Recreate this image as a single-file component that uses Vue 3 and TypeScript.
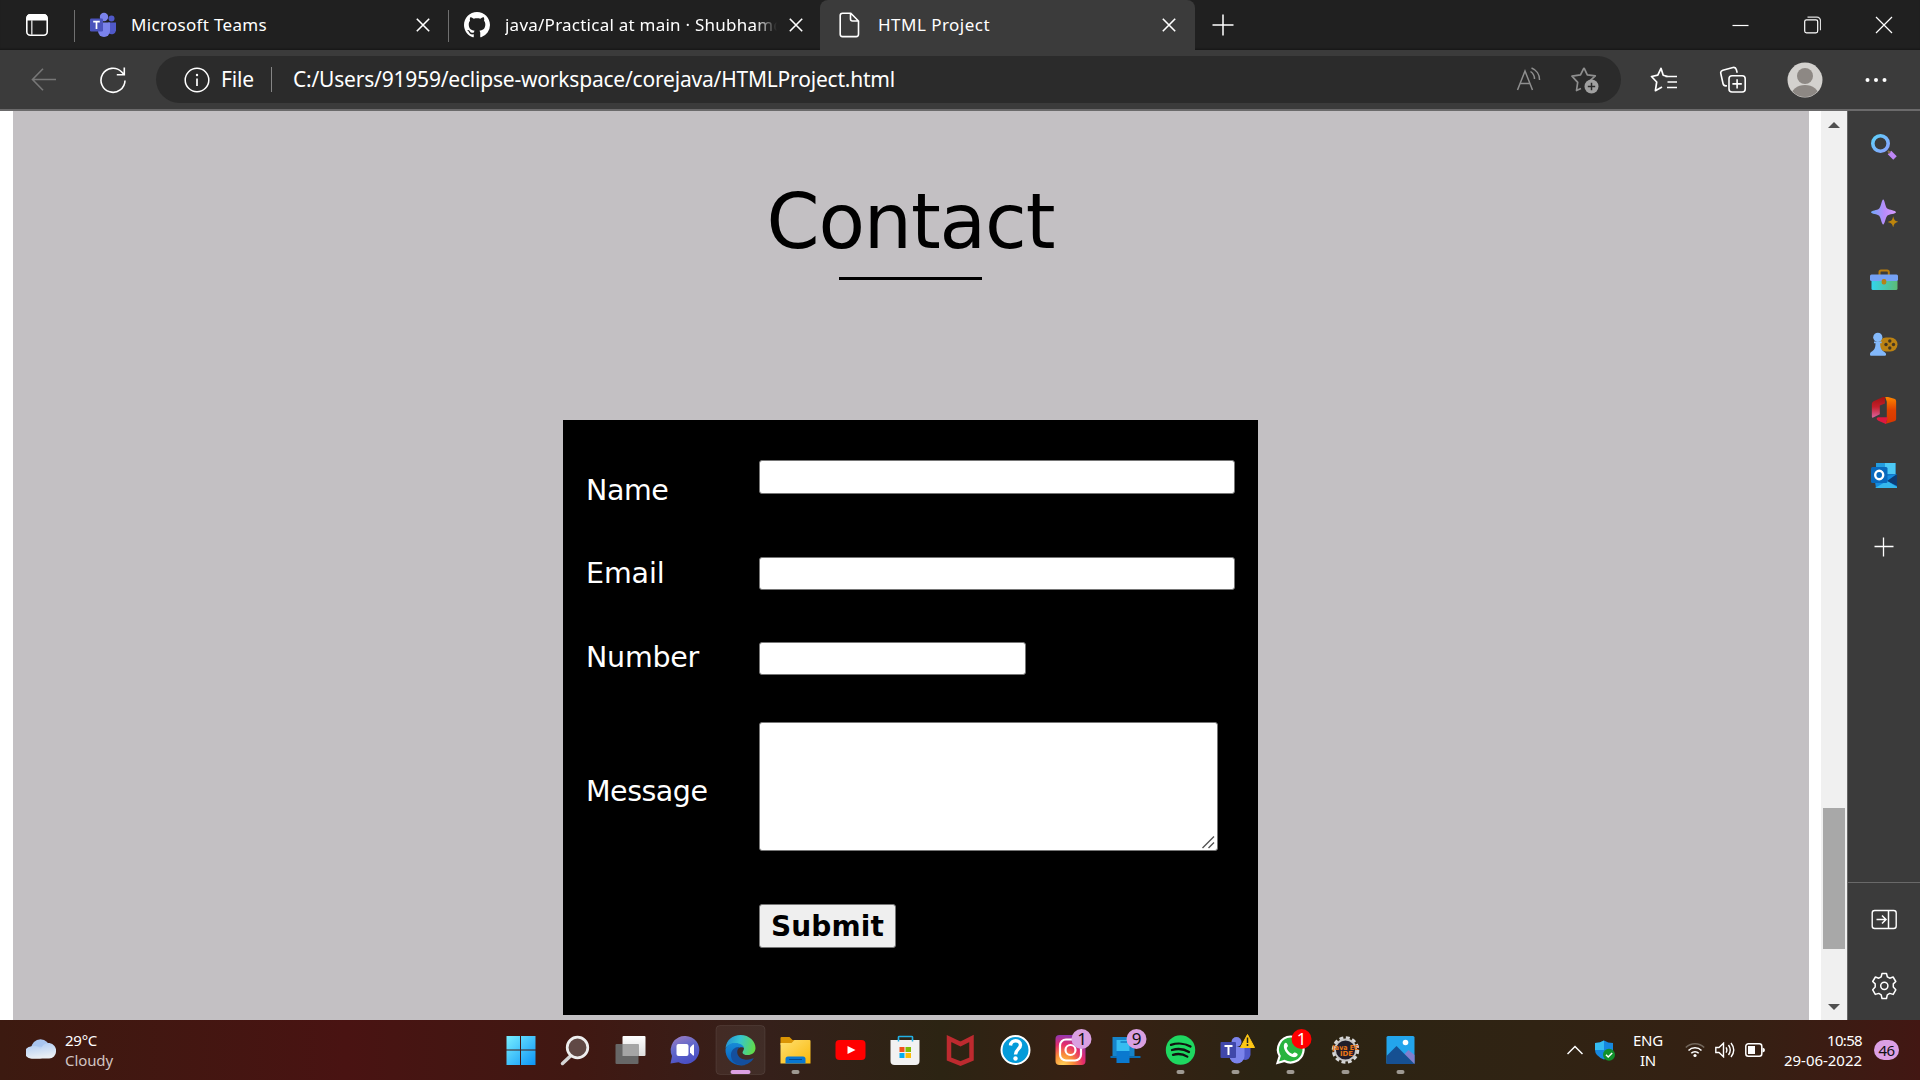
<script setup lang="ts">
import { reactive } from 'vue'

interface Tab { id: string; title: string; width: number; fit: number; active: boolean }

const tabs: Tab[] = [
  { id: 'teams', title: 'Microsoft Teams', width: 374, fit: 136, active: false },
  { id: 'github', title: 'java/Practical at main · Shubhamd', width: 373, fit: 279, active: false },
  { id: 'file', title: 'HTML Project', width: 375, fit: 112, active: true },
]
const form = reactive({ name: '', email: '', number: '', message: '' })

// Tracks a line of text out to a given width in pixels.
const vFit = {
  mounted(el: HTMLElement, binding: { value: number }) {
    const count = (el.textContent ?? '').trim().length
    const natural = el.getBoundingClientRect().width
    el.style.letterSpacing = `${(binding.value - natural) / count}px`
  },
}
</script>

<template>
  <div class="screen">
    <header class="tabbar">
      <div class="tab-actions">
        <svg width="24" height="24" viewBox="0 0 24 24"><rect x="1.8" y="1.8" width="20.4" height="20.4" rx="3.5" fill="none" stroke="#fff" stroke-width="1.6" /><path d="M1.5 7.5V5a4 4 0 0 1 4-4h13a4 4 0 0 1 4 4v2.500z" fill="#fff" /><path d="M6.800 7v15" stroke="#ccc" stroke-width="1.500" /></svg>
      </div>
      <div v-for="tab in tabs" :key="tab.id" class="tab" :class="{ active: tab.active }" :style="{ width: tab.width + 'px' }">
        <svg v-if="tab.id === 'teams'" class="favicon" width="26" height="26" viewBox="0 0 26 26">
          <circle cx="21.500" cy="6.500" r="3" fill="#5059c9" /><path d="M18 10.500h8v8a4.500 4.500 0 0 1-7 3z" fill="#5059c9" />
          <circle cx="14" cy="5" r="4.200" fill="#7b83eb" /><path d="M8 10.500h12v8.500a6 6 0 0 1-12 0z" fill="#7b83eb" />
          <rect x="0" y="6.500" width="13" height="13" rx="1.300" fill="#4b53bc" /><path d="M3.200 9.600h6.600M6.500 9.600v7.500" stroke="#fff" stroke-width="1.700" />
        </svg>
        <svg v-else-if="tab.id === 'github'" class="favicon" width="26" height="26" viewBox="0 0 16 16"><path fill="#fff" d="M8 0C3.580 0 0 3.580 0 8c0 3.540 2.290 6.530 5.470 7.590.4.070.55-.17.55-.38 0-.19-.01-.82-.01-1.490-2.010.37-2.530-.49-2.690-.94-.09-.23-.48-.94-.82-1.130-.28-.15-.68-.52-.01-.53.63-.01 1.080.58 1.230.82.72 1.210 1.870.87 2.330.66.07-.52.28-.87.51-1.070-1.780-.2-3.640-.89-3.640-3.950 0-.87.31-1.590.82-2.150-.08-.2-.36-1.020.08-2.120 0 0 .67-.21 2.200.82.64-.18 1.320-.27 2-.27s1.360.09 2 .27c1.530-1.040 2.200-.82 2.200-.82.44 1.100.16 1.920.08 2.120.51.56.82 1.270.82 2.150 0 3.070-1.870 3.750-3.650 3.950.29.25.54.73.54 1.480 0 1.070-.01 1.930-.01 2.200 0 .21.15.46.55.38A8.010 8.010 0 0 0 16 8c0-4.420-3.580-8-8-8z" /></svg>
        <svg v-else class="favicon" width="26" height="26" viewBox="0 0 26 26"><path d="M5.500 1.200h8.300l7.700 7.800v13.300a2.300 2.300 0 0 1-2.300 2.300H5.500a2.300 2.300 0 0 1-2.300-2.300V3.500a2.300 2.300 0 0 1 2.300-2.300zM13.500 1.500v5.500a2 2 0 0 0 2 2h5.800" fill="none" stroke="#fff" stroke-width="1.600" /></svg>
        <div class="tab-title" :class="{ fade: tab.id === 'github' }"><span v-fit="tab.fit" class="fit">{{ tab.title }}</span></div>
        <svg class="tab-close" width="14" height="14" viewBox="0 0 14 14"><path d="M.8.800l12.400 12.400M13.200.800.800 13.200" stroke="#fff" stroke-width="1.600" /></svg>
      </div>
      <svg class="new-tab" width="22" height="22" viewBox="0 0 22 22"><path d="M11 .500v21M.500 11h21" stroke="#fff" stroke-width="1.500" /></svg>
      <div class="window-controls">
        <svg width="18" height="18" viewBox="0 0 18 18"><path d="M1.500 9.500h16" stroke="#fff" stroke-width="1.200" /></svg>
        <svg width="18" height="18" viewBox="0 0 18 18"><rect x="1.700" y="3.800" width="13" height="13" rx="1.800" fill="none" stroke="#fff" stroke-width="1.200" /><path d="M4.500 1.200h9.500a3.500 3.500 0 0 1 3.500 3.500v9.500" fill="none" stroke="#ddd" stroke-width="1.200" /></svg>
        <svg width="18" height="18" viewBox="0 0 18 18"><path d="M1 1l16 16M17 1 1 17" stroke="#fff" stroke-width="1.200" /></svg>
      </div>
    </header>

    <div class="toolbar">
      <svg class="back" width="26" height="26" viewBox="0 0 26 26"><path d="M25 12.500H1.500M12 1.800 1.500 12.500 12 23.200" fill="none" stroke="#777" stroke-width="1.600" /></svg>
      <svg class="reload" width="28" height="28" viewBox="0 0 28 28"><path d="M26 14.500A12 12 0 1 1 22.500 5.800L25 8.500M25.300 1.500v7.300h-7.500" fill="none" stroke="#fff" stroke-width="1.600" /></svg>
      <div class="address">
        <svg width="26" height="26" viewBox="0 0 26 26"><circle cx="13" cy="13" r="11.800" fill="none" stroke="#fff" stroke-width="1.500" /><path d="M13 11.500v7.500" stroke="#fff" stroke-width="1.700" /><circle cx="13" cy="8" r="1.200" fill="#fff" /></svg>
        <div class="scheme"><span v-fit="33" class="fit">File</span></div>
        <i class="divider"></i>
        <div class="url"><span v-fit="602" class="fit">C:/Users/91959/eclipse-workspace/corejava/HTMLProject.html</span></div>
        <svg class="read" width="26" height="26" viewBox="0 0 26 26"><path d="M1.500 23 9 4l7.500 19M4.200 16.500h9.600M14.500 4.500a9 9 0 0 1 4 7.500M15.500 1a12.500 12.500 0 0 1 8 12" fill="none" stroke="#8f8f8f" stroke-width="1.500" /></svg>
        <svg class="fav" width="28" height="28" viewBox="0 0 28 28"><path d="M13 1.800l3.300 7 8 1.100-5.500 5M10 22.500l-4.500 2 1.200-8.200L1 10.200l8.500-1.400L13 1.800" fill="none" stroke="#8f8f8f" stroke-width="1.700" stroke-linejoin="round" /><circle cx="20.500" cy="20.500" r="7" fill="#a0a0a0" /><path d="M20.500 16.800v7.400M16.800 20.500h7.400" stroke="#292929" stroke-width="1.500" /></svg>
      </div>
      <div class="tools">
        <svg width="28" height="28" viewBox="0 0 28 28"><path d="M17.500 10.500 13.200 9.200 11 2.300 7.800 9.200 1.500 10.500l5.200 5.500-1.300 8.700 6.600-3.800" fill="none" stroke="#fff" stroke-width="1.700" stroke-linejoin="round" /><path d="M15.500 10.500H27M17.500 16H27M17 21.500h10" stroke="#fff" stroke-width="1.700" /></svg>
        <svg width="28" height="28" viewBox="0 0 28 28"><rect x="10" y="9.800" width="16.200" height="16.200" rx="3" fill="none" stroke="#fff" stroke-width="1.600" /><path d="M18.100 13.200v9.400M13.400 17.900h9.400M8 19.800l-1.200.1A3 3 0 0 1 4 17.500L1.800 7.500a2.800 2.800 0 0 1 2-3.300L14 1.500a2.800 2.800 0 0 1 3.300 2l.9 3.300" fill="none" stroke="#fff" stroke-width="1.600" /></svg>
        <svg width="36" height="36" viewBox="0 0 36 36"><clipPath id="face"><circle cx="18" cy="18" r="17" /></clipPath><circle cx="18" cy="18" r="17.500" fill="#d3d1ce" /><g clip-path="url(#face)" fill="#8d8884"><circle cx="18" cy="14" r="8" /><ellipse cx="18" cy="34" rx="14" ry="11" /></g></svg>
        <svg width="24" height="24" viewBox="0 0 24 24" fill="#fff"><circle cx="3.500" cy="12" r="2" /><circle cx="12" cy="12" r="2" /><circle cx="20.500" cy="12" r="2" /></svg>
      </div>
    </div>

    <div class="body">
      <main class="page">
        <section class="contact">
          <h1><span v-fit="288" class="fit">Contact</span></h1>
          <div class="underline"></div>
          <form class="form" @submit.prevent>
            <div class="row r-name"><label for="name"><span v-fit="82.500" class="fit">Name</span></label><input id="name" v-model="form.name" class="field" /></div>
            <div class="row r-email"><label for="email"><span v-fit="78.500" class="fit">Email</span></label><input id="email" v-model="form.email" class="field" /></div>
            <div class="row r-number"><label for="number"><span v-fit="113" class="fit">Number</span></label><input id="number" v-model="form.number" class="field short" /></div>
            <div class="row r-message"><label for="message"><span v-fit="121.500" class="fit">Message</span></label>
              <div class="area"><textarea id="message" v-model="form.message"></textarea><svg width="13" height="13" viewBox="0 0 13 13"><path d="M.500 12 12 .500M6.500 12 12 6.500" stroke="#555" stroke-width="1.400" /></svg></div>
            </div>
            <div class="row r-submit"><label></label><button type="submit"><span v-fit="113" class="fit">Submit</span></button></div>
          </form>
        </section>
      </main>
      <div class="scrollbar">
        <svg width="12" height="6" viewBox="0 0 12 6"><path d="M0 6 6 0l6 6z" fill="#505050" /></svg>
        <div class="track"><div class="thumb"></div></div>
        <svg width="12" height="6" viewBox="0 0 12 6"><path d="M0 0h12L6 6z" fill="#505050" /></svg>
      </div>
      <aside class="sidebar">
        <svg class="cell" viewBox="-14 -14 28 28">
          <defs>
            <linearGradient id="sLens" x1="0" y1="0" x2="1" y2="1"><stop offset="0" stop-color="#5ed0fa" /><stop offset="1" stop-color="#8ba1ff" /></linearGradient>
            <linearGradient id="sStar" x1="0" y1="0" x2="1" y2="0"><stop offset="0" stop-color="#70a8fa" /><stop offset=".55" stop-color="#b98cfb" /><stop offset="1" stop-color="#d79cff" /></linearGradient>
            <linearGradient id="sBox" x1="0" y1="0" x2="1" y2="0"><stop offset="0" stop-color="#32d4ee" /><stop offset="1" stop-color="#5dbb74" /></linearGradient>
            <linearGradient id="sOffice" x1="0" y1="0" x2="0" y2="1"><stop offset="0" stop-color="#ff8a00" /><stop offset=".5" stop-color="#e04200" /><stop offset="1" stop-color="#d83600" /></linearGradient>
            <linearGradient id="sOfficeL" x1="0" y1="0" x2="0" y2="1"><stop offset="0" stop-color="#9c1210" /><stop offset=".5" stop-color="#c61f2b" /><stop offset="1" stop-color="#d963a0" /></linearGradient>
          </defs>
          <path d="M5.500 5.500 11 11" stroke="#bd86f6" stroke-width="5" /><path d="m4 4 2 2" stroke="#8a744f" stroke-width="2" /><circle cx="-3.500" cy="-3.500" r="7.700" fill="none" stroke="url(#sLens)" stroke-width="3.600" />
        </svg>
        <svg class="cell" viewBox="-14 -14 28 28"><path d="M-.8-13.500C.7-13.500 1.200-6 3.200-4.500S12-2.600 12-.7 4.800 1 3.200 2.800.700 11.500-.8 11.500-3.200 4.600-4.800 2.800-13 1.200-13-.7s6.200-1.800 8.200-3.800S-2.300-13.500-.8-13.500z" fill="url(#sStar)" /><path d="M9.200 3.200c1 4 1.400 4.500 5.500 5.700-4.100 1.200-4.500 1.700-5.500 5.600-1-3.900-1.400-4.400-5.500-5.600 4.100-1.200 4.500-1.700 5.500-5.700z" fill="#bd850c" /></svg>
        <svg class="cell" viewBox="-14 -14 28 28"><path d="M-4.500-4v-3q0-1.500 1.500-1.500h6Q4.800-8.500 4.800-7v3" fill="none" stroke="#b87d0f" stroke-width="2" /><rect x="-12.500" y="1" width="26" height="10" rx="1.500" fill="url(#sBox)" /><rect x="-14" y="-4.500" width="28" height="6.500" rx="1.500" fill="#75a1f4" /><rect x="-2.300" y="0" width="4.600" height="5.500" rx="1.800" fill="#b78117" /></svg>
        <svg class="cell" viewBox="-14 -13.500 28 28"><rect x="-5" y="-7" width="18.500" height="14" rx="7" fill="#bb8213" /><g fill="#443722"><circle cx="5.800" cy="-3.500" r="1.700" /><circle cx="5.800" cy="3.500" r="1.700" /><circle cx="2" cy="0" r="1.700" /><circle cx="9.500" cy="0" r="1.700" /></g><circle cx="-6.200" cy="-7.200" r="4.600" fill="#85bafb" /><path d="M-10-3h7.600v1.800h-1.500c.2 4.200.8 6.500 3.600 8.200 2.200 1.500 2.500 2 2.300 3.500q-.2.800-1.200.8H-13q-1 0-1-1c0-2 .3-2.300 2.200-3.500 2.700-2 3.200-3.800 3.300-8H-10z" fill="#83b8fa" /></svg>
        <svg class="cell" viewBox="-14 -14 28 30"><path d="M-13-6.500q0-2 1.800-3L1-15v8L-4.500-5v9.500L-11 7.800q-2 1-2-1z" fill="url(#sOfficeL)" /><path d="M1-15 11-12q2 .6 2 2.500v19q0 2-2 2.500L1 15l2-3V-9z" fill="url(#sOffice)" /><path d="M-6.500 7.800H4L2 15l-8-3.500q-3.500-2.200-.5-3.700z" fill="#df1840" /></svg>
        <svg class="cell" viewBox="-14 -12 28 28"><rect x="-8" y="-13" width="19.500" height="16" rx="1.500" fill="#1577c5" /><path d="M1-12h10.500v11H1z" fill="#4cc9f5" /><path d="M-8-12H1v6h-9z" fill="#239de0" /><path d="M-10 1h13l10-2v14H-8z" fill="#138be0" /><path d="m3 6 10-7v12z" fill="#0d3c75" /><path d="m3 6 10 6v1H-9z" fill="#35b7ed" /><rect x="-13" y="-8" width="16.500" height="16" rx="1.500" fill="#0969bd" /><ellipse cx="-4.800" cy="0" rx="4" ry="4.200" fill="none" stroke="#fff" stroke-width="2.400" /></svg>
        <svg class="cell plus" viewBox="-14 -14 28 28"><path d="M-9.500-.5h19M-.500-9.500v19" stroke="#fff" stroke-width="1.300" /></svg>
        <div class="bottom">
          <svg class="cell" viewBox="-14 -13.500 28 28"><rect x="-11.800" y="-9" width="24" height="18" rx="2.500" fill="none" stroke="#fff" stroke-width="1.400" /><path d="M4.500-9V9M-7.500 0h9M-2-4l4 4-4 4" fill="none" stroke="#fff" stroke-width="1.500" /></svg>
          <svg class="cell" viewBox="-14 -14 28 28"><path d="M-2.800-9.200-2-12.500h4.500l.8 3.300 2.400 1.400 3.400-1.200 2.700 4.500-2.500 2.400V1L11.800 3.800 9.200 8.400 5.700 7.400 3.300 8.800 2.500 12.500H-2L-2.800 8.800-5.200 7.400-8.700 8.400-11.300 3.800-8.800 1v-3.100l-2.500-2.400L-8.600-9l3.400 1.200z" fill="none" stroke="#fff" stroke-width="1.500" stroke-linejoin="round" /><circle cx=".3" cy="-.2" r="3.600" fill="none" stroke="#fff" stroke-width="1.500" /></svg>
        </div>
      </aside>
    </div>

    <footer class="taskbar">
      <div class="weather">
        <svg width="30" height="20" viewBox="0 0 30 20"><defs><linearGradient id="cl" x1="0" y1="0" x2=".3" y2="1"><stop offset="0" stop-color="#a9c8f3" /><stop offset="1" stop-color="#e9eef5" /></linearGradient></defs><circle cx="14.500" cy="9.500" r="9.300" fill="#a9c5ef" /><rect x="0" y="7.500" width="20" height="12" rx="6" fill="url(#cl)" /><path d="M5 19.500a6 6 0 0 1 0-12 8 8 0 0 1 10 3 7.500 7.500 0 0 1 15 2 6.800 6.800 0 0 1-7 7z" fill="url(#cl)" /></svg>
        <div class="lines"><div><span v-fit="32" class="fit">29°C</span></div><div class="dim"><span v-fit="48" class="fit">Cloudy</span></div></div>
      </div>
      <div class="apps">
        <svg viewBox="-27.5 -30 55 60"><defs><linearGradient id="win" x1="0" y1="0" x2="1" y2="1"><stop offset="0" stop-color="#78efff" /><stop offset="1" stop-color="#0c94f7" /></linearGradient></defs><path d="M-14-14H-.500v13.500H-14zM.500-14H15v13.500H.500zM-14 .500H-.500V15H-14zM.500.500H15V15H.500z" fill="url(#win)" /></svg>
        <svg viewBox="-27.5 -30 55 60"><path d="M-5 6-13 13.500" stroke="#d5d5d5" stroke-width="3.500" stroke-linecap="round" /><circle cx="2" cy="-2.500" r="10.300" fill="#604945" stroke="#eee" stroke-width="2.700" /></svg>
        <svg viewBox="-27.5 -30 55 60"><defs><linearGradient id="tv" x1="0" y1="0" x2="0" y2="1"><stop offset="0" stop-color="#fff" /><stop offset="1" stop-color="#ddd" /></linearGradient></defs><rect x="-8" y="-14" width="23" height="20" rx="1" fill="url(#tv)" /><rect x="-15" y="-6" width="23" height="20" rx="1" fill="#676767" /><path d="M-8-6H8V6H-8z" fill="#a5a5a5" /></svg>
        <svg viewBox="-27.5 -30 55 60"><defs><linearGradient id="chat" x1="0" y1="0" x2=".4" y2="1"><stop offset="0" stop-color="#a37fc1" /><stop offset=".5" stop-color="#6268ca" /><stop offset="1" stop-color="#4b50c4" /></linearGradient></defs><path d="M0-14a14 14 0 1 1-7 26.200L-15 13.500l1.500-7.500A14 14 0 0 1 0-14z" fill="url(#chat)" /><rect x="-9" y="-6" width="12" height="12" rx="2" fill="#fff" /><path d="m4.500-2.500 3-3h1v11h-1l-3-3z" fill="#fff" /></svg>
        <svg viewBox="-27.5 -30 55 60">
          <defs><linearGradient id="eg" x1="0" y1=".3" x2="1" y2=".5"><stop offset="0" stop-color="#2490d5" /><stop offset=".45" stop-color="#35c5d0" /><stop offset="1" stop-color="#62dc48" /></linearGradient><linearGradient id="eb" x1="0" y1="0" x2="0" y2="1"><stop offset="0" stop-color="#178bd7" /><stop offset="1" stop-color="#075bb9" /></linearGradient></defs>
          <rect x="-24.500" y="-24.500" width="49" height="49" rx="4" fill="#fff" fill-opacity=".06" stroke="#fff" stroke-opacity=".08" />
          <path d="M-15-2C-14-10-8-15 0-15 9-15 15-8.500 15-2c0 4.500-3.500 7-8 7-3 0-5-1.200-5-2.600C2 1.500 3.500.500 3.500-2-.500-8-10-8-15-2z" fill="url(#eg)" />
          <path d="M-15-1c2-5 6.500-6.500 11-6 4.500.5 7 2.800 7.500 5C2-3.500-4-3.200-5 2.500-5.500 8.500 0 12 5 15-7 17.500-15.500 9-15-1z" fill="url(#eb)" /><path d="M-1-2.800C-5 0-4 8 4 9.500c4 .7 7.500-.7 9.300-1.500C11 12.500 6 15.300 1 15-7 14.500-10 9-9.500 4-9 0-5-3.500-1-2.800z" fill="#144f9d" />
          <rect x="-10" y="20" width="20" height="4" rx="2" fill="#dda0e3" />
        </svg>
        <svg viewBox="-27.5 -30 55 60"><defs><linearGradient id="fo" x1="0" y1="0" x2="1" y2="1"><stop offset="0" stop-color="#ffdf70" /><stop offset="1" stop-color="#f9b90b" /></linearGradient></defs><path d="M-15-12q0-1 1-1h8l3 3h7v5h-19z" fill="#da9404" /><path d="M-15-7h11l3-3h15q1 0 1 1v22.500h-30z" fill="url(#fo)" /><path d="M-10 13.500V9q0-2.500 2.500-2.500h15Q10 6.500 10 9v4.500z" fill="#0877d1" /><path d="M-6.500 9.500h13" stroke="#064c8f" /><rect class="running" x="-4" y="20" width="8" height="4" rx="2" /></svg>
        <svg viewBox="-27.5 -30 55 60"><rect x="-15" y="-10" width="30" height="20" rx="4" fill="#f00" /><path d="M-3-4v8l8-4z" fill="#fff" /></svg>
        <svg viewBox="-27.5 -30 55 60"><path d="M-7-9v-4q0-.5 1-.5H6q1 0 1 .5v4" fill="none" stroke="#22b1e4" stroke-width="1.600" /><path d="M-15-10h29V11q0 4-4 4h-21q-4 0-4-4z" fill="#f2f2f2" /><path d="M-6-3h5v5h-5z" fill="#f1511b" /><path d="M0-3h5.500v5H0z" fill="#80bc06" /><path d="M-6 3h5v5h-5z" fill="#00adef" /><path d="M0 3h5.500v5H0z" fill="#fbbc09" /><path d="M-7-10.500v2M7-10.500v2" stroke="#22b1e4" stroke-width="1.500" /></svg>
        <svg viewBox="-27.5 -30 55 60"><path d="M-11.500-11.500 0-6l11-5.500V9L0 13.500-11.500 9z" fill="none" stroke="#bd2a2f" stroke-width="4.500" /></svg>
        <svg viewBox="-27.5 -30 55 60"><circle r="14" fill="#049bd9" stroke="#fff" stroke-width="2" /><path d="M-5-4.500C-4.500-11 5-10.500 5-5 5-1 0-.5 0 4.500" fill="none" stroke="#fff" stroke-width="3.400" /><circle cx="0" cy="8.500" r="2.200" fill="#fff" /></svg>
        <svg viewBox="-27.5 -30 55 60"><defs><radialGradient id="ig" cx=".25" cy="1" r="1.150"><stop offset="0" stop-color="#ffd45b" /><stop offset=".3" stop-color="#fa8e37" /><stop offset=".6" stop-color="#e52b6b" /><stop offset="1" stop-color="#6b3dd0" /></radialGradient></defs><rect x="-15" y="-15" width="30" height="30" rx="4" fill="url(#ig)" /><rect x="-10.500" y="-10.500" width="21" height="21" rx="6" fill="none" stroke="#fff" stroke-width="2.200" /><circle r="5" fill="none" stroke="#fff" stroke-width="2.200" /><circle cx="11" cy="-11" r="10" fill="#daa0e2" /><text class="badge" x="11.500" y="-5">1</text></svg>
        <svg viewBox="-27.5 -30 55 60"><path d="M-13-13H9V8H-13z" fill="#1684c9" /><path d="M-15 6h30v2h-30z" fill="#096bb0" /><path d="M-9-10H4V13H-9z" fill="#0a79cf" /><path d="M-9-10H4V1H-9z" fill="#36bdf1" /><path d="M-5-8h7" stroke="#137bc0" stroke-width="1.500" /><circle cx="11" cy="-11" r="10" fill="#daa0e2" /><text class="badge" x="11" y="-5">9</text></svg>
        <svg viewBox="-27.5 -30 55 60"><circle r="14.700" fill="#1ed760" /><path d="M-9.500-5.200C-3-7.200 5-6.500 10-3.500M-8.500.000C-3-1.600 4-.8 8.500 2M-7.500 4.800C-3 3.500 3 4.200 6.800 6.600" fill="none" stroke="#111" stroke-width="2.300" stroke-linecap="round" /><rect class="running" x="-4" y="20" width="8" height="4" rx="2" /></svg>
        <svg viewBox="-27.5 -30 55 60"><path d="M5-3h10V5q-2 7-8 4z" fill="#5059c9" /><circle cx="1" cy="-8" r="5" fill="#7b83eb" /><path d="M-6-3H9V6A7 7 0 0 1-6 6z" fill="#7b83eb" /><rect x="-15" y="-8" width="15.500" height="16" rx="1" fill="#4047aa" /><path d="M-11-4h8M-7-4v9" stroke="#fff" stroke-width="2" /><path d="M12-15.500 19-2.500H5z" fill="#ffc715" stroke="#ffc715" stroke-linejoin="round" /><path d="M12-12.500V-7" stroke="#222" stroke-width="1.500" /><circle cx="12" cy="-5" r="1" fill="#222" /><rect class="running" x="-4" y="20" width="8" height="4" rx="2" /></svg>
        <svg viewBox="-27.5 -30 55 60"><path d="M0-13.500A13 13 0 1 1-6 11L-13 13l2.200-7A13 13 0 0 1 0-13.500z" fill="#29b43f" stroke="#fff" stroke-width="2.200" /><path d="M-6-6.500c1.500-1.500 2.500-.5 3.500 2.500C-4-2-4-2-3 0c1.200 2 2.800 3 5 4C4 2 4 2 6.500 3.500 8 4.500 7 6 5 7-1 8.500-9-1-6-6.500z" fill="#fff" /><circle cx="11" cy="-11" r="10" fill="#f00" /><text class="badge white" x="11" y="-5">1</text><rect class="running" x="-4" y="20" width="8" height="4" rx="2" /></svg>
        <svg viewBox="-27.5 -30 55 60"><circle r="12" fill="none" stroke="#d7d7d7" stroke-width="3.500" stroke-dasharray="3.800 2.480" /><circle r="10.500" fill="#211d29" stroke="#c6c6c6" stroke-width="1.800" /><text class="java" x="0" y="-.5" textLength="26" lengthAdjust="spacingAndGlyphs">Java EE</text><text class="java" x="1" y="5.500">IDE</text><rect class="running" x="-4" y="20" width="8" height="4" rx="2" /></svg>
        <svg viewBox="-27.5 -30 55 60"><rect x="-14" y="-14" width="28" height="28" rx="1.500" fill="#23a5ec" /><path d="M2 6 8 0l6 5v9H2z" fill="#817fce" /><path d="M-14 6-4-4 14 14h-28z" fill="#165092" /><circle cx="5" cy="-7.500" r="2.800" fill="#fff" /><rect class="running" x="-4" y="20" width="8" height="4" rx="2" /></svg>
      </div>
      <div class="tray">
        <svg class="chevron" width="16" height="10" viewBox="0 0 16 10"><path d="M.500 9 8 1.500 15.500 9" fill="none" stroke="#fff" stroke-width="1.500" /></svg>
        <svg class="shield" width="20" height="21" viewBox="0 0 20 21"><path d="M9 .500Q13 3 18 3v7q0 6-9 9.500Q0 16 0 10V3q5 0 9-2.500z" fill="#1688df" /><path d="M9 .500V10H0V3q5 0 9-2.500z" fill="#35bdf2" /><circle cx="14" cy="14.800" r="6" fill="#11902b" /><path d="m11 14.800 2.200 2.200 4-4" fill="none" stroke="#fff" stroke-width="1.500" /></svg>
        <div class="lines lang"><div><span v-fit="30" class="fit">ENG</span></div><div><span v-fit="16" class="fit">IN</span></div></div>
        <div class="status">
          <svg width="20" height="16" viewBox="0 0 20 16" fill="none" stroke="#fff" stroke-width="1.600"><path d="M.800 5.500a13 13 0 0 1 18.400 0" stroke="#71665b" /><path d="M3.500 8.500a9.200 9.200 0 0 1 13 0M6.300 11.300a5.200 5.200 0 0 1 7.400 0" /><circle cx="10" cy="13.500" r="1.600" fill="#fff" stroke="none" /></svg>
          <svg width="20" height="16" viewBox="0 0 20 16" fill="none" stroke="#fff" stroke-width="1.400"><path d="M.800 5.500H4L8.500 1.200v13.600L4 10.500H.800zM11 5.300q1.800 2.700 0 5.400M13.500 3q3.500 5 0 10M16 1q5.500 7 0 14" /></svg>
          <svg width="20" height="16" viewBox="0 0 20 16"><rect x=".8" y="1.800" width="16" height="12.400" rx="2.500" fill="none" stroke="#fff" stroke-width="1.500" /><path d="M3 4h7v8H3zM17.500 5.500q2.500.5 2.500 2.500t-2.500 2.500z" fill="#fff" /></svg>
        </div>
        <div class="lines clock"><div><span v-fit="35" class="fit">10:58</span></div><div><span v-fit="78" class="fit">29-06-2022</span></div></div>
        <div class="count"><span v-fit="16" class="fit">46</span></div>
      </div>
    </footer>
  </div>
</template>

<style>
html, body { margin: 0; overflow: hidden; background: #202020; }
</style>

<style scoped>
* { box-sizing: border-box; }
.screen { width: 1920px; height: 1080px; display: flex; flex-direction: column; overflow: hidden; font-family: "Noto Sans", "Open Sans", sans-serif; color: #fff; }
svg { display: block; flex: none; }
.fit { display: inline-block; white-space: nowrap; }

.tabbar { height: 50px; flex: none; display: flex; background: #202020; box-shadow: inset 0 -2px 2px -1px #161616; }
.tab-actions { width: 74px; padding: 13px 0 0 25px; }
.tab { position: relative; height: 50px; display: flex; align-items: center; padding: 0 18px 0 15px; border-left: 1px solid transparent; }
.tab:not(.active)::before { content: ""; position: absolute; left: -1px; top: 10px; width: 1px; height: 32px; background: #707070; }
.tab.active { background: #3b3b3b; border-radius: 8px 8px 0 0; padding: 0 19px 0 16px; margin-left: -1px; }
.favicon { margin-right: 15px; }
.tab-title { flex: 1; overflow: hidden; font-size: 17px; line-height: 48px; margin-right: 12px; }
.fade { mask-image: linear-gradient(to right, #000 92%, transparent 100%); }
.new-tab { margin: 14px 0 0 17px; }
.window-controls { margin-left: auto; display: flex; gap: 54px; padding: 16px 27px 0 0; }

.toolbar { height: 61px; flex: none; display: flex; align-items: center; background: #3b3b3b; border-bottom: 2px solid #6b6a6b; }
.back { margin-left: 31px; }
.reload { margin-left: 42px; }
.address { margin-left: 29px; width: 1465px; height: 47px; border-radius: 24px; background: #2b2b2b; display: flex; align-items: center; padding-left: 28px; font-size: 21px; line-height: 46px; }
.scheme { width: 50px; margin-left: 11px; padding-bottom: 1px; }
.divider { width: 1px; height: 25px; background: #858585; margin-left: 0; }
.url { margin-left: 21px; flex: 1; padding-bottom: 1px; }
.read { margin-right: 29px; }
.fav { margin-right: 22px; }
.tools { display: flex; align-items: center; margin-left: 29px; }
.tools svg:nth-child(2) { margin-left: 41px; }
.tools svg:nth-child(3) { margin-left: 40px; }
.tools svg:nth-child(4) { margin-left: 41px; }

.body { height: 909px; flex: none; display: flex; background: #fff; }
.page { width: 1821px; padding: 0 12px 0 13px; font-family: "DejaVu Sans", sans-serif; }
.contact { height: 909px; padding-right: 1px; background: #c3c0c3; display: flex; flex-direction: column; align-items: center; color: #000; }
h1 { margin: 66px 0 0; height: 90px; font-size: 76px; line-height: 90px; font-weight: 400; }
.underline { width: 143px; height: 3px; margin-top: 10px; background: #000; }
.form { width: 695px; height: 595px; margin-top: 140px; padding: 2px 0 0 23px; background: #000; color: #fff; font-size: 28.5px; }
.row { display: flex; align-items: center; }
label { width: 173px; line-height: 34px; flex: none; }
.r-name { height: 110px; }
.r-name label { padding-top: 28px; }
.r-name .field { height: 34px; }
.r-email { height: 83px; }
.r-number { height: 87px; }
.r-number label { padding-bottom: 1px; }
.r-message { height: 169px; }
.r-message label { padding-top: 11px; }
.r-submit { height: 110px; }
.field { width: 476px; height: 33px; border: 1px solid #767676; border-radius: 3px; background: #fff; padding: 0 6px; outline: none; }
.short { width: 267px; }
.area { position: relative; width: 459px; height: 129px; }
textarea { display: block; width: 100%; height: 100%; resize: none; border: 1px solid #767676; border-radius: 3px; background: #fff; outline: none; }
.area svg { position: absolute; right: 3px; bottom: 2px; }
button { width: 137px; height: 44px; padding: 2px 0 0; border: 1px solid #767676; border-radius: 3px; background: #efefef; color: #000; font: 700 28px/40px "DejaVu Sans", sans-serif; }

.scrollbar { width: 26px; background: #f0f0f0; display: flex; flex-direction: column; align-items: center; padding: 11px 0 10px; }
.track { flex: 1; width: 22px; padding-top: 680px; }
.thumb { height: 141px; background: #a8a8a8; }
.sidebar { width: 73px; background: #3b3b3b; border-left: 1px solid #666; display: flex; flex-direction: column; padding-top: 3px; }
.cell { width: 28px; height: 28px; margin: 19px 0 19px 22px; }
.plus { margin-top: 23px; }
.bottom { margin-top: auto; height: 138px; border-top: 1px solid #696969; padding-top: 4px; display: flex; flex-direction: column; }

.taskbar { height: 60px; flex: none; display: flex; background: linear-gradient(90deg, #3c1a10 0, #491312 18%, #401812 30%, #35201a 40%, #2c2413 49%, #382013 57%, #2b2413 66%, #302313 80%, #352013 91%, #421713 100%); font-size: 15px; }
.weather { width: 493px; padding: 0 0 0 26px; display: flex; gap: 9px; }
.weather svg { margin-top: 19px; }
.lines { padding-top: 10px; line-height: 20px; }
.dim { color: #d1c4c1; }
.apps { display: flex; width: 935px; }
.apps svg { width: 55px; height: 60px; }
.running { fill: #9e9992; }
.badge { font: 17px "Noto Sans", sans-serif; text-anchor: middle; fill: #111; }
.white { fill: #fff; }
.java { font: 700 7px "DejaVu Sans", sans-serif; text-anchor: middle; fill: #e97817; }
.tray { flex: 1; display: flex; padding-left: 139px; }
.chevron { margin-top: 25px; }
.shield { margin: 20px 0 0 12px; }
.lang { width: 40px; margin-left: 13px; text-align: center; }
.status { display: flex; gap: 10px; margin: 22px 0 0 17px; }
.clock { width: 97px; text-align: right; }
.count { width: 25px; height: 20px; margin: 20px 0 0 12px; border-radius: 10px; background: #dca0e5; color: #111; text-align: center; line-height: 20px; }
</style>
